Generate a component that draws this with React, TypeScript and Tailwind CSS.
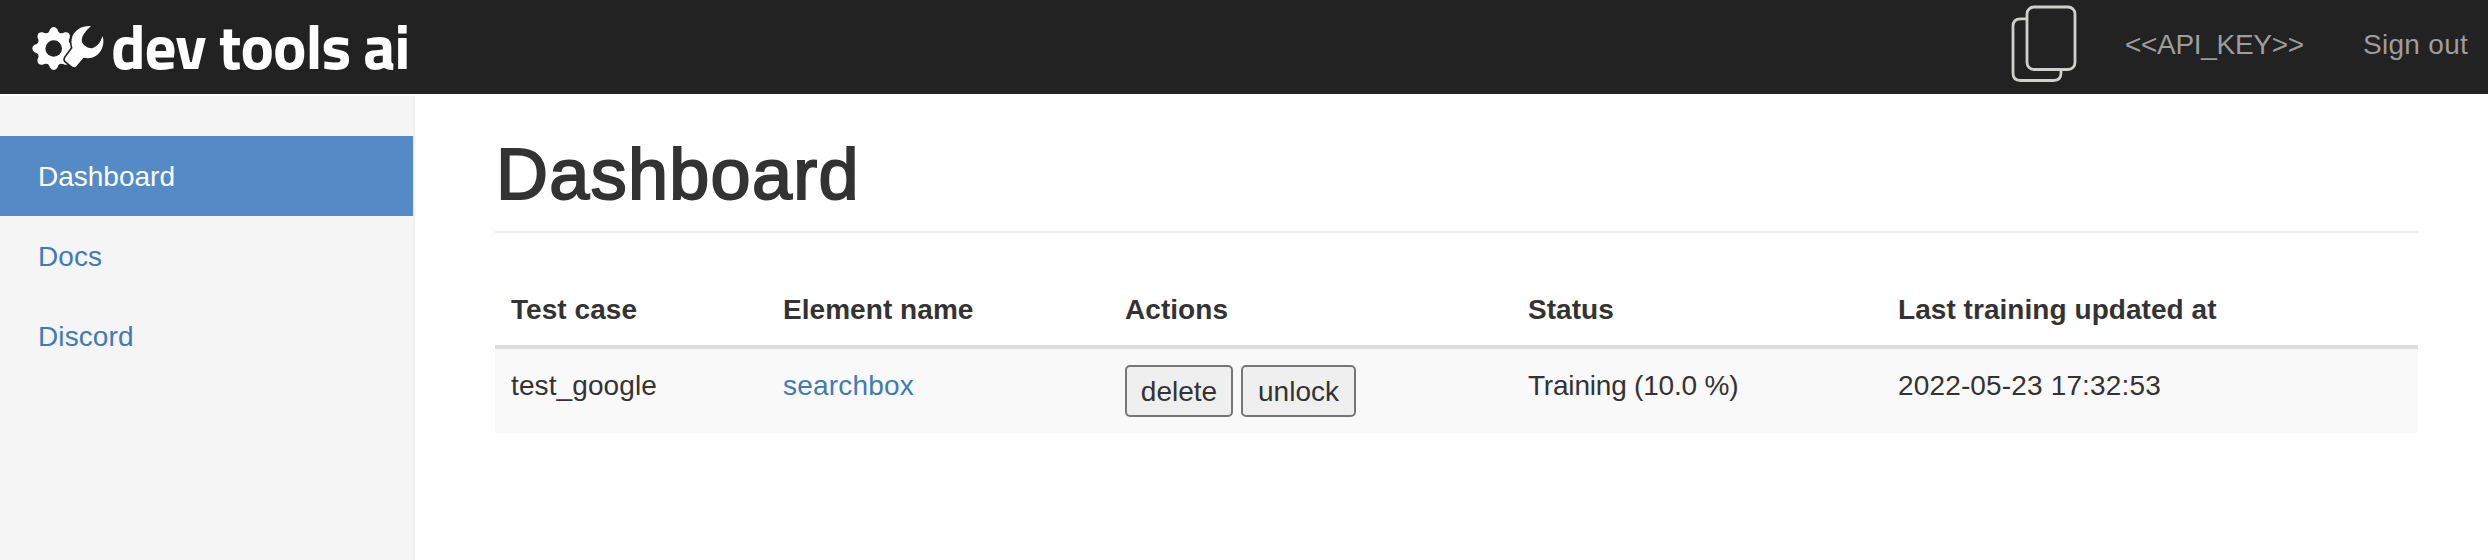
import React from "react";

const navItems = ["Dashboard", "Docs", "Discord"];

const rows = [
  {
    testCase: "test_google",
    element: "searchbox",
    status: "Training (10.0 %)",
    updatedAt: "2022-05-23 17:32:53",
  },
];

function gearPath() {
  const teeth = 8;
  const pts: string[] = [];
  const cx = 21.7;
  const cy = 22.5;
  for (let i = 0; i < teeth; i++) {
    const a = (i / teeth) * Math.PI * 2 - Math.PI / 2;
    const p = (r: number, d: number) =>
      `${(cx + r * Math.cos(a + d)).toFixed(2)} ${(cy + r * Math.sin(a + d)).toFixed(2)}`;
    pts.push(`${i ? "L" : "M"}${p(16.8, -0.34)} Q${p(17.6, -0.24)} ${p(19.6, -0.19)}`);
    pts.push(`Q${p(23.6, 0)} ${p(19.6, 0.19)} Q${p(17.6, 0.24)} ${p(16.8, 0.34)}`);
  }
  return pts.join(" ") + "Z";
}

function LogoMark() {
  return (
    <svg className="h-[46px] w-[74px] shrink-0 overflow-visible" viewBox="0 0 74 46">
      <path d={gearPath()} fill="#fff" />
      <circle cx="21.7" cy="22.5" r="8.3" fill="#222" />
      <path
        d="M59 0 C50 -0.500 43.500 3.500 40.500 10 C39 14 39.200 18 40.500 22 L33.500 31.500 Q32 33.800 34 35.500 L40.500 40.800 Q42.800 42 44.500 40 L51.500 31.800 C59 33.500 66 30.500 69.500 23.500 C71.500 19.500 72.200 14.500 70.500 10 C68.500 16.500 65.500 20.500 60 22.200 C56 22.500 51.500 19.500 50 16 C48.800 11 52.500 6 59 0 Z"
        fill="#fff"
        stroke="#222"
        strokeWidth="3.2"
        strokeLinejoin="round"
        paintOrder="stroke"
      />
    </svg>
  );
}

function CopyIcon() {
  return (
    <svg
      className="h-[78px] w-[66px] shrink-0"
      viewBox="0 0 66 78"
      fill="none"
      stroke="#cfcfcc"
      strokeWidth="2.8"
    >
      <path d="M15.500 13.800 H9.500 Q2 13.800 2 21.300 V68 Q2 75.500 9.500 75.500 H42.500 Q50 75.500 50 68 V65" />
      <rect x="16" y="2" width="48" height="62.500" rx="7" />
    </svg>
  );
}

function ActionButton({ children, className }: { children: React.ReactNode; className: string }) {
  return (
    <button
      className={`h-[52px] rounded-[5px] border-2 border-[#767676] bg-[#efefef] text-center text-[28px] leading-[49px] ${className}`}
    >
      {children}
    </button>
  );
}

export default function App() {
  return (
    <div className="flex h-[560px] flex-col bg-white font-['Liberation_Sans',Arial,sans-serif] text-[28px] leading-[40px] text-[#333]">
      <header className="mb-[2px] flex h-[94px] shrink-0 items-start justify-between bg-[#222] pr-[20px]">
        <div className="flex pl-[32px] pt-[26px]">
          <LogoMark />
          <span className="-mt-[8px] ml-[5px] whitespace-nowrap font-['Titillium_Web','Open_Sans',sans-serif] text-[63px] font-bold leading-[56px] tracking-[-1px] text-white">
            dev tools ai
          </span>
        </div>
        <nav className="flex whitespace-nowrap text-[#9d9d9d]">
          <div className="pt-[5px]">
            <CopyIcon />
          </div>
          <span className="ml-[48px] mt-[25px] w-[180px] tracking-[-0.3px]">&lt;&lt;API_KEY&gt;&gt;</span>
          <a className="ml-[58px] mt-[25px] w-[105px] tracking-[0.3px]">Sign out</a>
        </nav>
      </header>
      <div className="flex min-h-0 flex-1">
        <aside className="w-[415px] shrink-0 border-r-2 border-[#eee] bg-[#f5f5f5] pt-[40px]">
          {navItems.map((item, i) => (
            <a
              key={item}
              className={
                i === 0
                  ? "block h-[80px] bg-[#548ac6] pl-[38px] leading-[82px] text-white"
                  : "block h-[80px] pl-[38px] leading-[82px] tracking-[0.1px] text-[#427ab5]"
              }
            >
              {item}
            </a>
          ))}
        </aside>
        <main className="flex-1 pl-[80px] pr-[70px] pt-[38px]">
          <h1 className="h-[99px] border-b-2 border-[#eee] pl-px text-[72px] font-normal leading-[80px] tracking-[1.3px] [-webkit-text-stroke:2px_#333]">
            Dashboard
          </h1>
          <table className="mt-[40px] w-full table-fixed border-separate border-spacing-0 text-left">
            <colgroup>
              <col className="w-[272px]" />
              <col className="w-[342px]" />
              <col className="w-[403px]" />
              <col className="w-[370px]" />
              <col />
            </colgroup>
            <thead>
              <tr>
                {["Test case", "Element name", "Actions", "Status", "Last training updated at"].map((h) => (
                  <th
                    key={h}
                    className="h-[76px] border-b-4 border-[#ddd] px-[16px] pt-[17px] pb-[15px] align-top font-bold tracking-[0.05px]"
                  >
                    {h}
                  </th>
                ))}
              </tr>
            </thead>
            <tbody>
              {rows.map((r) => (
                <tr key={r.testCase} className="h-[84px] bg-[#f9f9f9] align-top">
                  <td className="px-[16px] pt-[17px] tracking-[0.1px]">{r.testCase}</td>
                  <td className="px-[16px] pt-[17px] tracking-[0.2px] text-[#427ab5]">{r.element}</td>
                  <td className="px-[16px] pt-[16px]">
                    <div className="flex gap-[8px]">
                      <ActionButton className="w-[108px]">delete</ActionButton>
                      <ActionButton className="w-[115px]">unlock</ActionButton>
                    </div>
                  </td>
                  <td className="px-[16px] pt-[17px] tracking-[-0.2px]">{r.status}</td>
                  <td className="px-[16px] pt-[17px] tracking-[0.15px]">{r.updatedAt}</td>
                </tr>
              ))}
            </tbody>
          </table>
        </main>
      </div>
    </div>
  );
}
